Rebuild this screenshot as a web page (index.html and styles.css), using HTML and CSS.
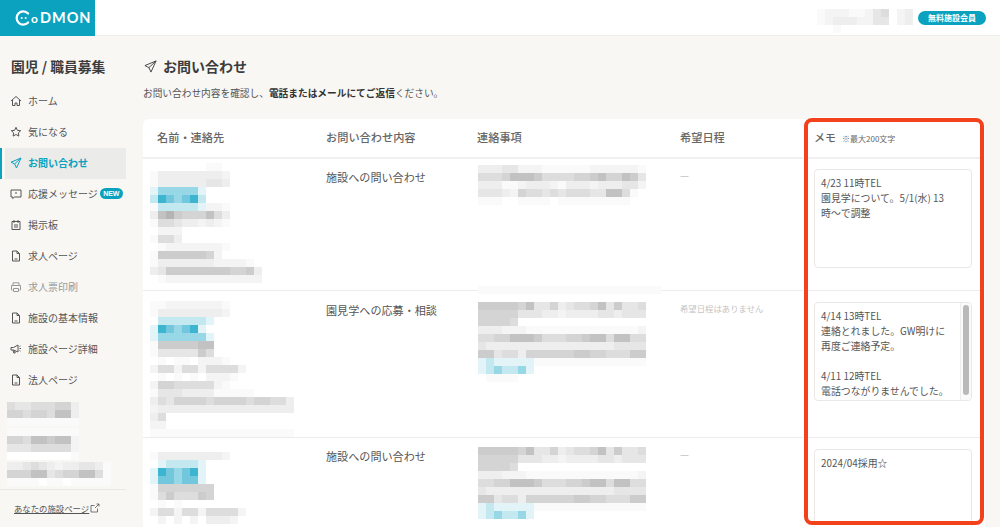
FILE: index.html
```html
<!DOCTYPE html>
<html lang="ja">
<head>
<meta charset="utf-8">
<title>お問い合わせ</title>
<link rel="stylesheet" href="styles.css">
</head>
<body>
<header class="topbar">
  <a class="logo">
    <svg class="logo-c" viewBox="0 0 15 15" width="16" height="16"><path d="M12.300 3.300a6.200 6.200 0 1 0 0 8.400" fill="none" stroke="#fff" stroke-width="2.100" stroke-linecap="round"/><circle cx="6.300" cy="7.500" r="1" fill="#fff"/><circle cx="10" cy="7.500" r="1" fill="#fff"/></svg>
    <span class="logo-text"><span class="logo-o">o</span>DMON</span>
  </a>
  <div class="account">
    <div class="mosaic" data-rows="122211245.23 123332244.23 ..1........."></div>
    <span class="member-badge">無料施設会員</span>
  </div>
</header>
<div class="layout">
  <aside class="sidebar">
    <h2 class="side-title">園児 / 職員募集</h2>
    <ul class="nav">
      <li class="nav-item"><svg class="ico" viewBox="0 0 12 12"><path d="M1 6 6 1.500 11 6M2.500 5v5.500h2.500V8h2v2.500h2.500V5"/></svg>ホーム</li>
      <li class="nav-item"><svg class="ico" viewBox="0 0 12 12"><path d="m6 1.300 1.400 3 3.300.4-2.400 2.200.6 3.200L6 8.500l-2.900 1.600.6-3.200L1.300 4.700l3.300-.4z"/></svg>気になる</li>
      <li class="nav-item nav-active"><svg class="ico" viewBox="0 0 12 12"><path d="M11 1 1 5.200l3.600 1.700L6.500 11zM11 1 4.600 6.900"/></svg>お問い合わせ</li>
      <li class="nav-item"><svg class="ico" viewBox="0 0 12 12"><path d="M1 2h10v7H4.500L2.800 10.500V9H1z"/><path class="dot" d="M5 5h2"/></svg>応援メッセージ<span class="new-badge">NEW</span></li>
      <li class="nav-item"><svg class="ico" viewBox="0 0 12 12"><path d="M2 2.500h8v8H2zM4 1v3M8 1v3M4 6h4M4 8h4"/></svg>掲示板</li>
      <li class="nav-item"><svg class="ico" viewBox="0 0 12 12"><path d="M2.500 1h4.500l2.500 2.500V11h-7zM7 1v2.500h2.500M4.500 9h3"/></svg>求人ページ</li>
      <li class="nav-item nav-muted"><svg class="ico" viewBox="0 0 12 12"><path d="M3 4V1.800h6V4M2.500 9H1.500V4.500h9V9h-1M3.500 7.500h5v3h-5z"/></svg>求人票印刷</li>
      <li class="nav-item"><svg class="ico" viewBox="0 0 12 12"><path d="M2.500 1h4.500l2.500 2.500V11h-7zM7 1v2.500h2.500M4.500 9h3"/></svg>施設の基本情報</li>
      <li class="nav-item"><svg class="ico" viewBox="0 0 12 12"><path d="M1 4.500h2.500L8 2v7L3.500 7H1zM3 7l.8 3h1.400L4.500 7.300M9.500 3.500l1-.6M9.500 5.500h1.500M9.500 7.500l1 .6"/></svg>施設ページ詳細</li>
      <li class="nav-item"><svg class="ico" viewBox="0 0 12 12"><path d="M2.500 1h4.500l2.500 2.500V11h-7zM7 1v2.500h2.500M4.500 9h3"/></svg>法人ページ</li>
    </ul>
    <div class="side-blocks">
      <div class="mosaic" data-rows="544555663 665665883 111111111"></div>
      <div class="mosaic" data-rows="111111111 665887882 444555552 ........1"></div>
      <div class="mosaic" data-rows="3345432334431 6668845668851 1111.11.11111"></div>
    </div>
    <div class="side-foot">
      <a class="side-link">あなたの施設ページ</a>
      <svg class="ext" viewBox="0 0 10 10"><path d="M7.500 5.500v3.500h-6.500v-6.500h3.500M5 5l4-4M6.500 1H9v2.500"/></svg>
    </div>
  </aside>
  <main class="content">
    <h1 class="page-title"><svg class="title-ico" viewBox="0 0 14 14"><path d="M13 1 1 6l4.300 2.200L7.500 13zM13 1 5.300 8.200"/></svg>お問い合わせ</h1>
    <p class="lead">お問い合わせ内容を確認し、<strong>電話またはメールにてご返信</strong>ください。</p>
    <section class="table">
      <div class="row row-head">
        <div class="col-name">名前・連絡先</div>
        <div>お問い合わせ内容</div>
        <div>連絡事項</div>
        <div>希望日程</div>
        <div class="col-memo"><strong>メモ</strong><small>※最大200文字</small></div>
      </div>
      <div class="row row-a">
        <div class="cell-mosaic-name"><div class="mosaic" data-rows=".......11. 1333333332 1333333443 accccca bedcdeb 1bbbbba221 3897666853 1554332321 .222 1553 .122222221 177777762 1333333322221 34777777776673 .1222222222222"></div></div>
        <div class="cell-text">施設への問い合わせ</div>
        <div class="cell-mosaic-note"><div class="mosaic" data-rows="333442221111112222221 555688875555667866874 333112333213332333442 444326554545554488510 11100111101111111110"></div></div>
        <div class="cell-date">—</div>
        <div class="col-memo">
          <div class="memo memo-a">4/23 11時TEL<br>園見学について。5/1(水) 13<br>時〜で調整</div>
        </div>
      </div>
      <div class="row row-b">
        <div class="cell-mosaic-name"><div class="mosaic" data-rows="1122222221 1333333332 .bbbbbba aedcdea acccccca 17777788 14444475 .1.11.2221 255255255552 .1.1.1.2221 2665555521 1444333311111 354666656666566553 233333333333333333 35 22 111111111111111111"></div></div>
        <div class="cell-text">園見学への応募・相談</div>
        <div class="cell-mosaic-note note-b"><div class="mosaic" data-rows="11111111111111111111111 ....................... 777776844634556847445 666664443323333443444 66665 333222111111111111112 556688875556678858855 433333333333333334444 774553666666776655577 abaaaaa11111111111111 abcbbca .1111"></div></div>
        <div class="cell-date cell-none">希望日程はありません</div>
        <div class="col-memo">
          <div class="memo memo-b">4/14 13時TEL<br>連絡とれました。GW明けに<br>再度ご連絡予定。<br><br>4/11 12時TEL<br>電話つながりませんでした。<span class="memo-track"><span class="memo-thumb"></span></span></div>
        </div>
      </div>
      <div class="row row-c">
        <div class="cell-mosaic-name"><div class="mosaic" data-rows="1333333332 .abbbba aedcdea addcdda 16666666 15755576 .1.1 255255255552 .2.2.2.3332"></div></div>
        <div class="cell-text">施設への問い合わせ</div>
        <div class="cell-mosaic-note"><div class="mosaic" data-rows="777776844634556847445 666664443323333443444 66665 333222111111111111112 556688875556678858855 433333333333333334444 774553666666776655577 abaaaaa11111111111111 abcbbca"></div></div>
        <div class="cell-date">—</div>
        <div class="col-memo">
          <div class="memo memo-c">2024/04採用☆</div>
        </div>
      </div>
      <div class="highlight"></div>
    </section>
  </main>
</div>
<script src="script.js"></script>
</body>
</html>
```
FILE: styles.css
```css
* { box-sizing: border-box; }
html, body { margin: 0; height: 527px; overflow: hidden; }
body {
  background: #f8f7f4;
  color: #555;
  font-family: "Noto Sans CJK JP", "Noto Sans", sans-serif;
  font-size: 10px;
}
.topbar {
  height: 36px;
  background: #fff;
  border-bottom: 1px solid #eeeeec;
  display: flex;
  justify-content: space-between;
}
.logo {
  width: 95px;
  height: 36px;
  background: #0aa2bf;
  display: flex;
  align-items: center;
  padding-left: 15px;
  color: #fff;
}
.logo-c { flex: none; }
.logo-text {
  font-family: "Lato", sans-serif;
  font-weight: 700;
  font-size: 14.500px;
  letter-spacing: 1px;
  line-height: 16px;
}
.logo-o { font-size: 12px; margin: 0 1px 0 0; }
.account { display: flex; align-items: flex-start; gap: 5px; padding: 9px 14px 0 0; }
.member-badge {
  width: 68px;
  height: 14px;
  margin-top: 2px;
  border-radius: 7px;
  background: #0aa2bf;
  color: #fff;
  font-size: 8px;
  font-weight: 700;
  line-height: 14px;
  text-align: center;
}
.layout { display: flex; height: 491px; }
.sidebar { width: 143px; flex: none; display: flex; flex-direction: column; }
.side-title {
  margin: 21px 0 10px 11px;
  color: #3c3c3c;
  font-size: 13.800px;
  line-height: 19px;
  font-weight: 700;
}
.nav { list-style: none; margin: 0; padding: 0; }
.nav-item {
  position: relative;
  display: flex;
  align-items: center;
  width: 121px;
  height: 31px;
  margin-left: 5px;
  padding: 0 0 2px 5px;
  white-space: nowrap;
}
.ico {
  flex: none;
  width: 12px;
  height: 12px;
  margin-right: 6px;
  fill: none;
  stroke: #555;
  stroke-width: 1;
}
.nav-active { background: #ebebea; color: #0aa2bf; font-weight: 700; }
.nav-active .ico { stroke: #0aa2bf; }
.nav-active::before {
  content: "";
  position: absolute;
  left: -5px;
  top: 0;
  width: 2px;
  height: 31px;
  background: #0aa2bf;
}
.nav-muted { color: #999; }
.nav-muted .ico { stroke: #999; }
.new-badge {
  margin-left: 2px;
  width: 23px;
  height: 11px;
  flex: none;
  border-radius: 6px;
  background: #0aa2bf;
  color: #fff;
  font-family: "Liberation Sans", sans-serif;
  font-size: 7px;
  font-weight: 700;
  line-height: 11px;
  text-align: center;
}
.side-blocks { margin: 6px 0 0 7px; display: flex; flex-direction: column; gap: 2px; }
.side-foot {
  width: 126px;
  margin-top: 3px;
  padding: 11px 0 0 14px;
  border-top: 1px solid #e8e8e6;
  display: flex;
  align-items: center;
  gap: 1px;
}
.side-link { font-size: 8.400px; line-height: 14px; text-decoration: underline; color: #555; }
.ext { width: 10px; height: 10px; fill: none; stroke: #555; stroke-width: .8; }
.content { flex: 1; min-width: 0; padding-top: 20px; }
.page-title {
  margin: 0;
  height: 20px;
  display: flex;
  align-items: center;
  gap: 6px;
  padding-left: 1px;
  color: #3c3c3c;
  font-size: 14px;
  line-height: 20px;
  font-weight: 700;
}
.title-ico { width: 13px; height: 13px; fill: none; stroke: #3c3c3c; stroke-width: 1; }
.lead { margin: 9px 0 18px; font-size: 9.700px; line-height: 16px; white-space: nowrap; }
.lead strong { color: #333; font-weight: 700; }
.table { position: relative; width: 842px; background: #fff; border-radius: 6px 6px 0 0; }
.row { display: grid; grid-template-columns: 183px 151px 203px 124px 181px; }
.row-head {
  height: 40px;
  border-bottom: 2px solid #f0f0f0;
  font-size: 11.200px;
  line-height: 37px;
  font-weight: 500;
  color: #666;
}
.col-name { padding-left: 14px; }
.col-memo { padding: 0 13px 0 10px; }
.row-head strong { font-size: 11px; font-weight: 500; }
.row-head small { margin-left: 6px; font-size: 8px; font-weight: 400; }
.row-a { height: 132px; border-bottom: 1px solid #ececec; }
.row-b { height: 147px; border-bottom: 1px solid #ececec; }
.row-c { height: 200px; }
.cell-mosaic-name { padding: 4px 0 0 7px; }
.row-b .cell-mosaic-name { padding-top: 10px; }
.row-c .cell-mosaic-name { padding-top: 14px; }
.cell-mosaic-note { padding: 6px 0 0 1px; }
.note-b { padding-top: 0; margin-top: -5px; }
.row-c .cell-mosaic-note { padding-top: 9px; }
.cell-text { padding-top: 10px; font-size: 11.100px; line-height: 16px; }
.row-b .cell-text { padding-top: 11px; }
.cell-date { padding-top: 8px; font-size: 10px; line-height: 16px; color: #c4c4c4; }
.cell-none { padding-top: 9px; font-size: 8.400px; }
.memo {
  position: relative;
  border: 1px solid #e8e8e6;
  border-radius: 4px;
  padding: 6px 6px 0;
  font-size: 9.900px;
  line-height: 15px;
  white-space: nowrap;
  overflow: hidden;
}
.memo-a { height: 99px; margin-top: 10px; }
.memo-b { height: 99px; margin-top: 11px; }
.memo-c { height: 120px; margin-top: 11px; }
.memo-track {
  position: absolute;
  top: 0;
  right: 0;
  bottom: 0;
  width: 11px;
  border-left: 1px solid #eee;
  background: #fafafa;
}
.memo-thumb {
  position: absolute;
  top: 2px;
  left: 2px;
  width: 6px;
  height: 90px;
  border-radius: 3px;
  background: #b9b9b9;
}
.highlight {
  position: absolute;
  top: -1px;
  right: 1px;
  width: 180px;
  height: 407px;
  border: 4px solid #f2411b;
  border-radius: 8px;
  box-shadow: 0 0 0 1px #fff;
  pointer-events: none;
}
.mosaic { width: max-content; filter: blur(.4px); }
.m-row { display: flex; height: 8px; }
.m-cell { width: 8px; height: 8px; flex: none; }
.t0 { background: #fff; }
.t1 { background: #fafafa; }
.t2 { background: #f4f4f4; }
.t3 { background: #eeeeee; }
.t4 { background: #e6e6e6; }
.t5 { background: #dddddd; }
.t6 { background: #d4d4d4; }
.t7 { background: #cccccc; }
.t8 { background: #c2c2c2; }
.t9 { background: #b4b4b4; }
.ta { background: #e2f4f8; }
.tb { background: #c4e8f0; }
.tc { background: #98d8e6; }
.td { background: #72c7dc; }
.te { background: #3db4d0; }
```
FILE: script.js
```js
// Paint the blurred (privacy-masked) blocks from their tone strings.
document.querySelectorAll('.mosaic').forEach(function (m) {
  m.dataset.rows.trim().split(/\s+/).forEach(function (tones) {
    var row = document.createElement('div');
    row.className = 'm-row';
    tones.split('').forEach(function (t) {
      var cell = document.createElement('span');
      cell.className = 'm-cell' + (t === '.' ? ' t0' : ' t' + t);
      row.appendChild(cell);
    });
    m.appendChild(row);
  });
});
```
